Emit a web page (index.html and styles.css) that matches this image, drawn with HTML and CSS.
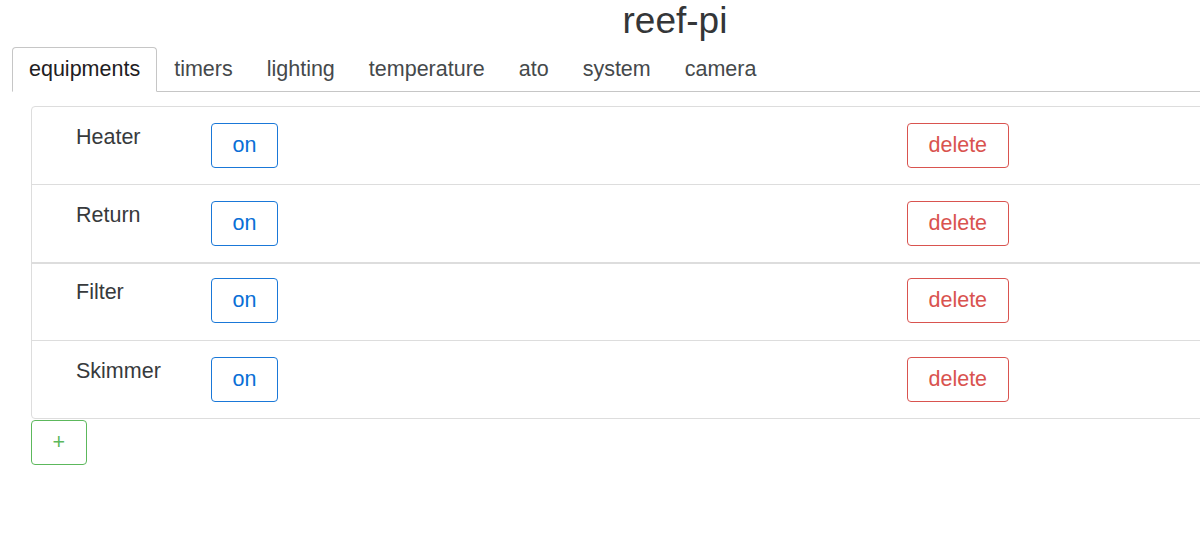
FILE: index.html
```html
<!DOCTYPE html>
<html>
<head>
<meta charset="utf-8">
<title>reef-pi</title>
<link rel="stylesheet" href="styles.css">
</head>
<body>
<div class="page">
  <h1 class="title">reef-pi</h1>
  <ul class="tabs">
    <li class="tab active">equipments</li>
    <li class="tab">timers</li>
    <li class="tab">lighting</li>
    <li class="tab">temperature</li>
    <li class="tab">ato</li>
    <li class="tab">system</li>
    <li class="tab">camera</li>
  </ul>
  <div class="list">
    <div class="item">
      <div class="name">Heater</div>
      <div class="cell"><button class="btn btn-blue">on</button></div>
      <div class="cell"><button class="btn btn-red">delete</button></div>
    </div>
    <div class="item item-split">
      <div class="name">Return</div>
      <div class="cell"><button class="btn btn-blue">on</button></div>
      <div class="cell"><button class="btn btn-red">delete</button></div>
    </div>
    <div class="item item-after-split">
      <div class="name">Filter</div>
      <div class="cell"><button class="btn btn-blue">on</button></div>
      <div class="cell"><button class="btn btn-red">delete</button></div>
    </div>
    <div class="item item-last">
      <div class="name">Skimmer</div>
      <div class="cell"><button class="btn btn-blue">on</button></div>
      <div class="cell"><button class="btn btn-red">delete</button></div>
    </div>
  </div>
  <div class="add-row"><button class="btn btn-green">+</button></div>
</div>
</body>
</html>
```
FILE: styles.css
```css
html, body {
  margin: 0;
  padding: 0;
  overflow: hidden;
  background: #ffffff;
}

body {
  font-family: "Liberation Sans", Helvetica, Arial, sans-serif;
  color: #373a3c;
}

.page {
  width: 1326px;
  margin-left: 12px;
}

.title {
  margin: 0 0 6px 0;
  padding-top: 1px;
  font-size: 37px;
  line-height: 40px;
  font-weight: normal;
  text-align: center;
  color: #343638;
}

.tabs {
  display: flex;
  list-style: none;
  margin: 0;
  padding: 0;
  border-bottom: 1px solid #c6c6c6;
}

.tab {
  margin-bottom: -1px;
  padding: 0 16px;
  border: 1px solid transparent;
  border-radius: 4px 4px 0 0;
  font-size: 21.5px;
  line-height: 43px;
  color: #45494b;
}

.tab.active {
  border-color: #c6c6c6 #c6c6c6 #ffffff;
  background: #ffffff;
  color: #1e2022;
}

.list {
  margin: 14px 19px 0 19px;
}

.item {
  display: grid;
  grid-template-columns: 135px 696px auto;
  padding: 16px 0 16px 44px;
  border: 1px solid #dddddd;
  margin-bottom: -1px;
}

.item:first-child {
  border-top-left-radius: 4px;
}

.item-split {
  margin-bottom: 0;
}

.item-after-split {
  padding-top: 14px;
  padding-bottom: 17px;
}

.item-last {
  margin-bottom: 0;
  border-bottom-left-radius: 4px;
}

.name {
  margin-top: -2px;
  font-size: 21.5px;
  line-height: 32px;
  color: #373a3c;
}

.btn {
  height: 45px;
  margin: 0;
  padding: 0 20.5px;
  border: 1px solid;
  border-radius: 4px;
  background: #ffffff;
  font-family: "Liberation Sans", Helvetica, Arial, sans-serif;
  font-size: 21.5px;
  line-height: 43px;
  cursor: pointer;
}

.btn-blue {
  color: #0a6fd6;
  border-color: #1a78d8;
}

.btn-red {
  color: #d9534f;
  border-color: #d9534f;
}

.btn-green {
  color: #5cb85c;
  border-color: #5cb85c;
}

.add-row {
  margin: 1px 0 0 19px;
}
```
